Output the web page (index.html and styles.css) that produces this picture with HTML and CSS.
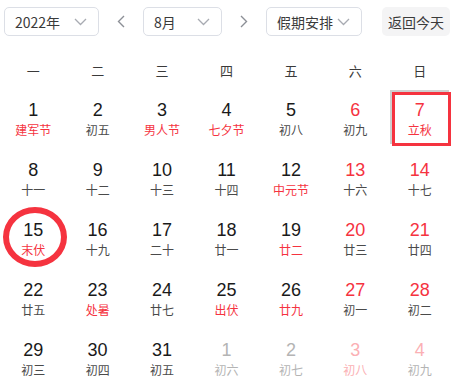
FILE: index.html
```html
<!DOCTYPE html>
<html lang="zh-CN">

<head>
    <meta charset="UTF-8">
    <meta name="viewport" content="width=device-width, initial-scale=1.0">
    <title>日历</title>
    <link rel="stylesheet" href="styles.css">
</head>

<body>
    <div class="calendar">
        <div class="toolbar">
            <div class="select select-year">
                <span>2022年</span>
                <svg class="chevron" width="13" height="8" viewBox="0 0 13 8"><path d="M1 1l5.5 5.5L12 1" /></svg>
            </div>
            <div class="nav">
                <svg width="8" height="13" viewBox="0 0 8 13"><path d="M7 1L1.5 6.5L7 12" /></svg>
            </div>
            <div class="select select-month">
                <span>8月</span>
                <svg class="chevron" width="13" height="8" viewBox="0 0 13 8"><path d="M1 1l5.5 5.5L12 1" /></svg>
            </div>
            <div class="nav">
                <svg width="8" height="13" viewBox="0 0 8 13"><path d="M1 1l5.5 5.5L1 12" /></svg>
            </div>
            <div class="select select-holiday">
                <span>假期安排</span>
                <svg class="chevron" width="13" height="8" viewBox="0 0 13 8"><path d="M1 1l5.5 5.5L12 1" /></svg>
            </div>
            <button class="today-btn">返回今天</button>
        </div>

        <div class="weekdays">
            <div>一</div>
            <div>二</div>
            <div>三</div>
            <div>四</div>
            <div>五</div>
            <div>六</div>
            <div>日</div>
        </div>

        <div class="days" id="days"></div>
    </div>

    <script>
        // [day, lunar, flags]  r = red lunar text, o = other month, c = circle mark, b = box mark
        const days = [
            [1, '建军节', 'r'], [2, '初五'], [3, '男人节', 'r'], [4, '七夕节', 'r'], [5, '初八'], [6, '初九'], [7, '立秋', 'rb'],
            [8, '十一'], [9, '十二'], [10, '十三'], [11, '十四'], [12, '中元节', 'r'], [13, '十六'], [14, '十七'],
            [15, '末伏', 'rc'], [16, '十九'], [17, '二十'], [18, '廿一'], [19, '廿二', 'r'], [20, '廿三'], [21, '廿四'],
            [22, '廿五'], [23, '处暑', 'r'], [24, '廿七'], [25, '出伏', 'r'], [26, '廿九', 'r'], [27, '初一'], [28, '初二'],
            [29, '初三'], [30, '初四'], [31, '初五'], [1, '初六', 'o'], [2, '初七', 'o'], [3, '初八', 'or'], [4, '初九', 'o']
        ];

        const daysEl = document.getElementById('days');

        days.forEach(function (d, i) {
            const flags = d[2] || '';
            const cell = document.createElement('div');
            cell.className = 'day';
            if (i % 7 >= 5) cell.classList.add('weekend');
            if (flags.includes('o')) cell.classList.add('other');
            if (flags.includes('c')) cell.classList.add('mark-circle');
            if (flags.includes('b')) cell.classList.add('mark-box');

            const num = document.createElement('div');
            num.className = 'num';
            num.textContent = d[0];

            const lunar = document.createElement('div');
            lunar.className = 'lunar';
            if (flags.includes('r')) lunar.classList.add('festival');
            lunar.textContent = d[1];

            cell.appendChild(num);
            cell.appendChild(lunar);
            daysEl.appendChild(cell);
        });
    </script>
</body>

</html>
```

FILE: styles.css
```css
html {
    overflow: hidden;
}

body {
    margin: 0;
    font-family: 'Liberation Sans', 'Noto Sans CJK SC', sans-serif;
    background: #ffffff;
    color: #222;
}

.calendar {
    width: 461px;
}

.toolbar {
    display: flex;
    align-items: center;
    padding: 7px 0 0 4px;
    height: 29px;
}

.select {
    box-sizing: border-box;
    height: 29px;
    display: flex;
    align-items: center;
    justify-content: space-between;
    padding: 0 11px 0 10px;
    border: 1px solid #dcdfe6;
    border-radius: 5px;
    font-family: 'Noto Sans CJK SC', sans-serif;
    font-size: 14px;
    color: #3a3a3a;
}

.select-year {
    width: 95px;
}

.select-month {
    width: 79px;
}

.select-holiday {
    width: 96px;
}

.chevron path {
    fill: none;
    stroke: #a8abb2;
    stroke-width: 1.3;
}

.nav {
    width: 44px;
    display: flex;
    justify-content: center;
}

.nav path {
    fill: none;
    stroke: #8c8f96;
    stroke-width: 1.4;
}

.today-btn {
    margin-left: 20px;
    width: 68px;
    height: 29px;
    border: none;
    border-radius: 5px;
    background: #f4f4f5;
    font-family: 'Noto Sans CJK SC', sans-serif;
    font-size: 14px;
    color: #3a3a3a;
    padding: 0;
}

.weekdays {
    display: grid;
    grid-template-columns: repeat(7, 1fr);
    width: 451px;
    margin: 14px 0 0 1px;
    height: 40px;
    align-items: center;
    text-align: center;
    font-family: 'Noto Sans CJK SC', sans-serif;
    font-size: 13px;
    color: #3a3a3a;
}

.days {
    display: grid;
    grid-template-columns: repeat(7, 1fr);
    grid-auto-rows: 60px;
    width: 451px;
    margin-left: 1px;
}

.day {
    position: relative;
    display: flex;
    flex-direction: column;
    align-items: center;
    justify-content: center;
    gap: 1px;
    padding-bottom: 2px;
    box-sizing: border-box;
}

.num {
    font-size: 18px;
    line-height: 20px;
    color: #1a1a1a;
}

.lunar {
    font-family: 'Noto Sans CJK SC', sans-serif;
    font-size: 12px;
    line-height: 17px;
    color: #4a4a4a;
}

.festival {
    color: #f5333f;
}

.weekend .num {
    color: #f5333f;
}

.other .num,
.other .lunar {
    color: #b4b4b4;
}

.other.weekend .num,
.other .festival {
    color: #fbb0b4;
}

.mark-circle::after {
    content: '';
    position: absolute;
    left: 2px;
    top: -3px;
    width: 52px;
    height: 48px;
    border: 6px solid #f5333f;
    border-radius: 50%;
}

.mark-box::after {
    content: '';
    position: absolute;
    left: 4px;
    top: 2px;
    width: 53px;
    height: 48px;
    border: 3px solid #f5333f;
    box-shadow: -2px -2px 0 0 #cfcfcf;
}
```
